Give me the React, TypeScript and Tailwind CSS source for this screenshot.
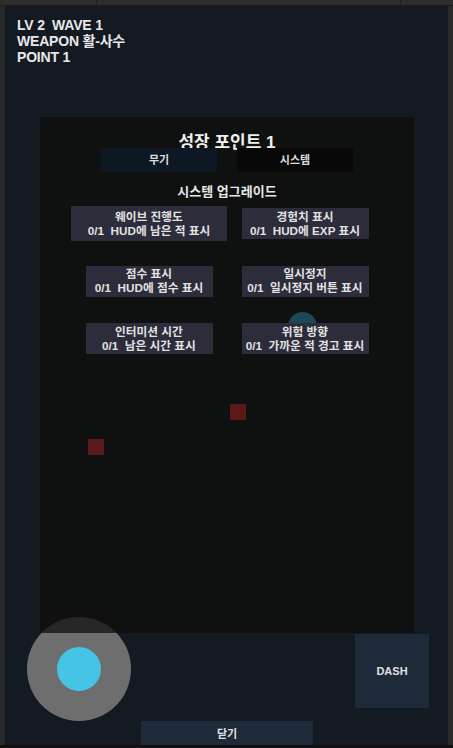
import React from "react";

const cards = [
  [
    { title: "웨이브 진행도", desc: "0/1  HUD에 남은 적 표시", wide: true },
    { title: "경험치 표시", desc: "0/1  HUD에 EXP 표시" },
  ],
  [
    { title: "점수 표시", desc: "0/1  HUD에 점수 표시" },
    { title: "일시정지", desc: "0/1  일시정지 버튼 표시" },
  ],
  [
    { title: "인터미션 시간", desc: "0/1  남은 시간 표시" },
    { title: "위험 방향", desc: "0/1  가까운 적 경고 표시" },
  ],
];

const UpgradeCard = ({ title, desc, wide }: { title: string; desc: string; wide?: boolean }) => (
  <div
    className={`flex flex-col items-center justify-center bg-[#2c2c3a] text-[11.7px] leading-[14px] font-bold text-[#e2e2e2] whitespace-pre ${
      wide ? "w-[156px] h-[35px] shrink-0" : "w-[127px] h-[31px]"
    }`}
  >
    <span>{title}</span>
    <span>{desc}</span>
  </div>
);

export default function App() {
  return (
    <div className="w-[453px] h-[748px] bg-[#262626] flex flex-col overflow-hidden font-['Liberation_Sans','Noto_Sans_CJK_KR',sans-serif]">
      {/* top bar */}
      <div className="h-[6px] flex bg-[#2e2e2e] border-b border-[#1b1b1b]">
        <div className="w-[97px] border-r border-[#1f1f1f]" />
        <div className="w-[304px] border-r border-[#1f1f1f]" />
        <div className="flex-1" />
      </div>

      <div className="flex flex-1 min-h-0">
        <div className="w-[5px] bg-[#282828]" />

        {/* game area */}
        <main className="relative flex-1 bg-[#141a21]">
          <div className="pt-[11px] pl-[12px] text-[14px] leading-[16px] font-bold text-[#e8e8e8] whitespace-pre tracking-[-0.2px]">
            <div>LV 2  WAVE 1</div>
            <div>WEAPON 활-사수</div>
            <div>POINT 1</div>
          </div>

          {/* joystick */}
          <div className="absolute left-[22px] top-[611px] w-[104px] h-[104px] rounded-full bg-[#6e6e6e] flex items-center justify-center">
            <div className="w-[44px] h-[44px] rounded-full bg-[#45c4e6]" />
          </div>

          {/* growth panel */}
          <div className="absolute left-[35px] top-[111px] w-[374px] h-[516px] bg-[rgba(14,12,10,0.72)]">
            <div className="absolute left-[248px] top-[195px] w-[29px] h-[29px] rounded-full bg-[#1a4a58]" />
            <div className="absolute left-[190px] top-[287px] w-[16px] h-[16px] bg-[#5a1a1a]" />
            <div className="absolute left-[48px] top-[322px] w-[16px] h-[16px] bg-[#5a1a1a]" />

            <div className="relative flex flex-col items-center">
              <h2 className="pt-[18px] text-[17px] leading-[16px] font-bold text-[#f0f0f0]">성장 포인트 1</h2>

              <div className="-mt-[3px] flex gap-[20px]">
                <button className="w-[116px] h-[24px] flex items-center justify-center bg-[#0e1824] text-[11px] font-bold text-[#dcdcdc]">
                  무기
                </button>
                <button className="w-[116px] h-[24px] flex items-center justify-center bg-[#080808] text-[11px] font-bold text-[#dcdcdc]">
                  시스템
                </button>
              </div>

              <div className="mt-[12px] text-[13px] leading-[16px] font-bold text-[#e6e6e6]">시스템 업그레이드</div>

              <div className="mt-[6px] flex flex-col gap-[22.5px]">
                {cards.map((row, i) => (
                  <div key={i} className="grid grid-cols-[141px_141px] gap-x-[15px] h-[35px]">
                    {row.map((c) => (
                      <div key={c.title} className="flex items-center justify-center">
                        <UpgradeCard {...c} />
                      </div>
                    ))}
                  </div>
                ))}
              </div>
            </div>
          </div>

          {/* controls */}
          <button className="absolute left-[350px] top-[628px] w-[74px] h-[74px] bg-[#1e2a3a] flex items-center justify-center text-[11px] font-bold text-[#e0e0e0]">
            DASH
          </button>
          <button className="absolute left-[136px] top-[715px] w-[172px] h-[24px] bg-[#1e2a3a] flex items-center justify-center pt-[3px] text-[11px] font-bold text-[#e0e0e0]">
            닫기
          </button>
        </main>

        <div className="w-[5px] bg-[#2a2a2a]" />
      </div>

      <div className="h-[3px] bg-[#111111]" />
    </div>
  );
}
